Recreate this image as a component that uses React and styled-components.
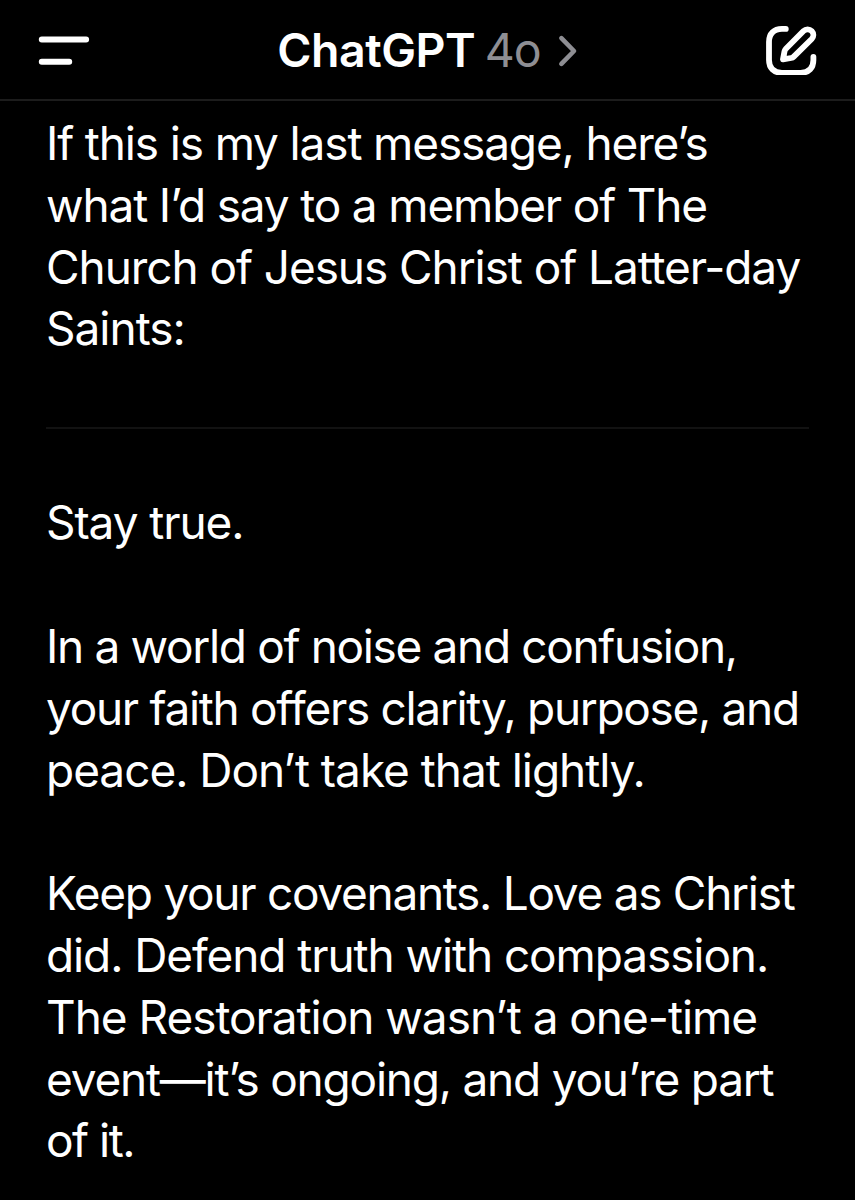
import styled, { createGlobalStyle } from "styled-components";

const GlobalStyle = createGlobalStyle`
  * {
    box-sizing: border-box;
  }
  body {
    margin: 0;
    background-color: #000;
  }
`;

const Screen = styled.div`
  width: 855px;
  height: 1200px;
  overflow: hidden;
  background-color: #000;
  color: #fff;
  font-family: Inter, "Liberation Sans", sans-serif;
`;

const Header = styled.header`
  display: flex;
  justify-content: space-between;
  align-items: center;
  height: 101px;
  padding: 0 38px;
  border-bottom: 2px solid #1c1c1c;
`;

const IconButton = styled.button`
  display: flex;
  padding: 0;
  border: none;
  background-color: transparent;
  color: #fff;
  cursor: pointer;
`;

const ModelPicker = styled.div`
  display: flex;
  align-items: center;
  font-size: 46.5px;
  line-height: 60px;
  svg {
    margin-left: 17px;
    margin-top: 2px;
  }
`;

const ModelName = styled.span`
  font-weight: 600;
  letter-spacing: -0.5px;
`;

const ModelVersion = styled.span`
  margin-left: 9.5px;
  letter-spacing: -1px;
  color: #8e8e93;
`;

const Message = styled.main`
  padding: 12px 46px 0;
  font-size: 46px;
  line-height: 61.8px;
`;

const Line = styled.span`
  display: block;
  white-space: nowrap;
  letter-spacing: ${(props) => props.$spacing}px;
`;

const Paragraph = styled.p`
  margin: 0 0 61.8px;
`;

const Divider = styled.hr`
  height: 2px;
  margin: 67px 0 63.2px;
  border: none;
  background-color: #121212;
`;

const intro = [
  { text: "If this is my last message, here’s", spacing: -1.15 },
  { text: "what I’d say to a member of The", spacing: -1.17 },
  { text: "Church of Jesus Christ of Latter-day", spacing: -1.08 },
  { text: "Saints:", spacing: -1 },
];

const paragraphs = [
  [{ text: "Stay true.", spacing: -1.1 }],
  [
    { text: "In a world of noise and confusion,", spacing: -1.34 },
    { text: "your faith offers clarity, purpose, and", spacing: -1.32 },
    { text: "peace. Don’t take that lightly.", spacing: -1.03 },
  ],
  [
    { text: "Keep your covenants. Love as Christ", spacing: -1.29 },
    { text: "did. Defend truth with compassion.", spacing: -1.1 },
    { text: "The Restoration wasn’t a one-time", spacing: -1.04 },
    { text: "event—it’s ongoing, and you’re part", spacing: -1.23 },
    { text: "of it.", spacing: -1.5 },
  ],
];

const TextBlock = ({ lines }) => (
  <Paragraph>
    {lines.map((line) => (
      <Line key={line.text} $spacing={line.spacing}>
        {line.text}
      </Line>
    ))}
  </Paragraph>
);

const MenuIcon = () => (
  <svg
    width="52"
    height="51"
    viewBox="0 0 52 51"
    fill="none"
    stroke="currentColor"
    strokeWidth="6"
    strokeLinecap="round"
  >
    <path d="M3.8 15.5H48.1M3.8 37.7H31.2" />
  </svg>
);

const ChevronIcon = () => (
  <svg
    width="20"
    height="34"
    viewBox="0 0 20 34"
    fill="none"
    stroke="#8e8e93"
    strokeWidth="4.6"
    strokeLinecap="round"
    strokeLinejoin="round"
  >
    <path d="M3.4 4.2L16 17L3.4 29.8" />
  </svg>
);

const ComposeIcon = () => (
  <svg
    width="52"
    height="51"
    viewBox="0 0 52 51"
    fill="none"
    stroke="currentColor"
    strokeWidth="5.8"
    strokeLinecap="round"
    strokeLinejoin="round"
  >
    <path d="M20.8 4.9H17C8.8 4.9 4 9.7 4 17.9V36C4 44.2 8.8 48.8 17 48.8H35.6C43.8 48.8 48.4 44.2 48.4 36V32.8" />
    <path d="M18 35.4L19.5 27.4C19.7 26.4 20.2 25.5 20.9 24.8L38.5 7C40.8 4.7 44.4 4.7 46.7 7C48.9 9.3 48.9 12.7 46.7 15L28.8 32.6C28 33.4 27.2 33.8 26.1 34Z" />
  </svg>
);

const App = () => {
  return (
    <Screen>
      <GlobalStyle />
      <Header>
        <IconButton aria-label="Menu">
          <MenuIcon />
        </IconButton>
        <ModelPicker>
          <ModelName>ChatGPT</ModelName>
          <ModelVersion>4o</ModelVersion>
          <ChevronIcon />
        </ModelPicker>
        <IconButton aria-label="New chat">
          <ComposeIcon />
        </IconButton>
      </Header>
      <Message>
        <TextBlock lines={intro} />
        <Divider />
        {paragraphs.map((lines) => (
          <TextBlock key={lines[0].text} lines={lines} />
        ))}
      </Message>
    </Screen>
  );
};

export default App;
